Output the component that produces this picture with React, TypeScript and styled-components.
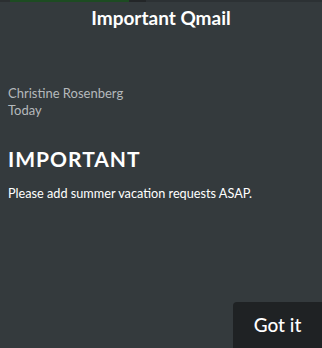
import styled, { createGlobalStyle } from 'styled-components'

const Global = createGlobalStyle`
    html, body {
        margin: 0;
        padding: 0;
        background: #343a3d;
    }
    body {
        font-family: Lato, 'Noto Sans', sans-serif;
    }
`

const App = () => {
    return (
        <Screen>
            <Global />
            <Progress>
                <span className="gap" />
                <span className="done" />
                <span className="sep" />
                <span className="rest" />
            </Progress>
            <Title>Important Qmail</Title>
            <Meta>
                <p>Christine Rosenberg</p>
                <p>Today</p>
            </Meta>
            <Subject>IMPORTANT</Subject>
            <Body>Please add summer vacation requests ASAP.</Body>
            <Footer>
                <GotIt>Got it</GotIt>
            </Footer>
        </Screen>
    )
}

const Screen = styled.div`
    display: flex;
    flex-direction: column;
    width: 322px;
    height: 348px;
    background: #343a3d;
    color: #ffffff;
    overflow: hidden;
`

const Progress = styled.div`
    display: flex;
    height: 2px;

    span {
        height: 100%;
    }
    .gap {
        width: 10px;
        background: #2b2f31;
    }
    .done {
        width: 119px;
        background: #1d4b22;
    }
    .sep {
        width: 17px;
        background: #232628;
    }
    .rest {
        flex: 1;
        background: #2c3134;
    }
`

const Title = styled.h1`
    margin: 0;
    padding-top: 5px;
    font-size: 19px;
    font-weight: 700;
    line-height: 22px;
    text-align: center;
`

const Meta = styled.div`
    margin-top: 56px;
    padding: 0 8px;

    p {
        margin: 0;
        font-size: 13px;
        line-height: 17px;
        color: #b4b9bc;
    }
`

const Subject = styled.h2`
    margin: 27px 0 0;
    padding: 0 8px;
    font-size: 21px;
    font-weight: 700;
    letter-spacing: 1px;
    line-height: 26px;
`

const Body = styled.p`
    margin: 13px 0 0;
    padding: 0 8px;
    font-size: 12.7px;
    line-height: 16px;
`

const Footer = styled.div`
    display: flex;
    justify-content: flex-end;
    margin-top: auto;
`

const GotIt = styled.button`
    width: 89px;
    height: 46px;
    border: none;
    border-radius: 4px 0 0 0;
    background: #1f2224;
    color: #ffffff;
    font-family: Lato, 'Noto Sans', sans-serif;
    font-size: 19px;
    font-weight: 500;
    padding: 0 0 2px;
`

export default App
